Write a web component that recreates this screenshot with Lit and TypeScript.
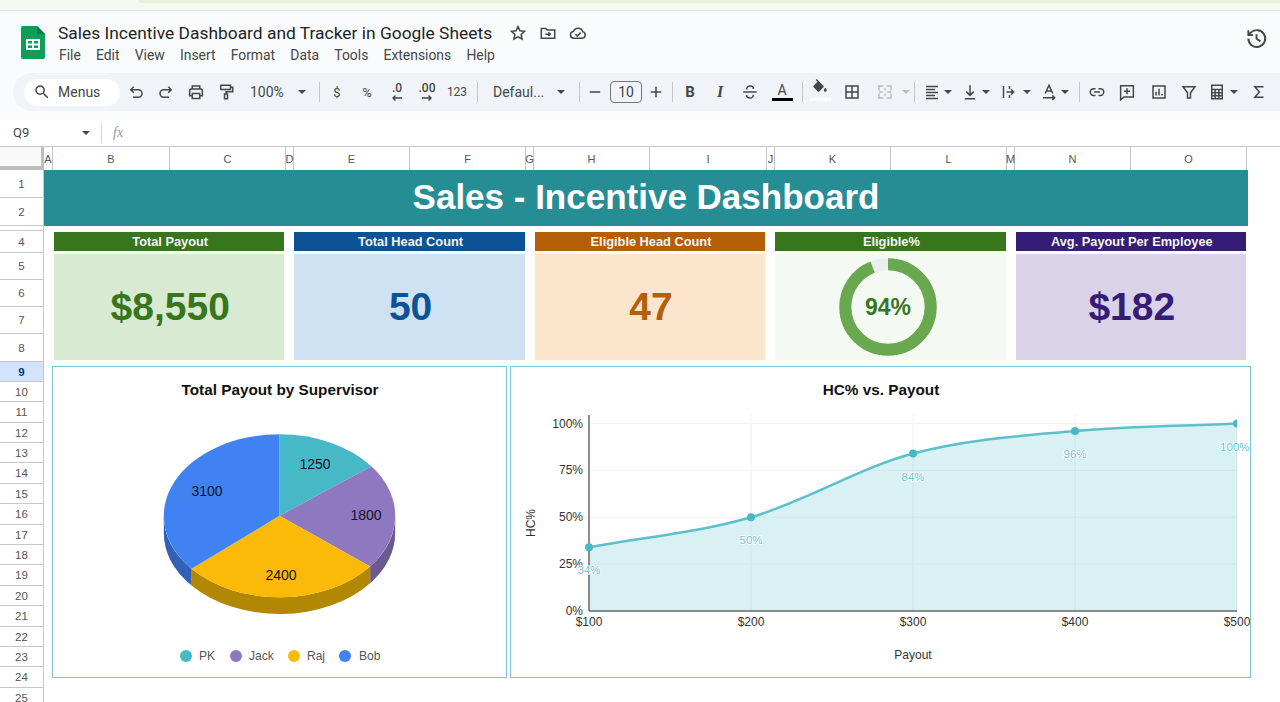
import { LitElement, css, html, svg } from "lit";
import { customElement } from "lit/decorators.js";

const ROWS: [string, number][] = [
  ["1", 28], ["2", 28], ["", 5], ["4", 22], ["5", 27], ["6", 27], ["7", 27], ["8", 28],
  ["9", 20], ["10", 20], ["11", 21], ["12", 20], ["13", 20], ["14", 21], ["15", 20],
  ["16", 21], ["17", 20], ["18", 20], ["19", 21], ["20", 20], ["21", 21], ["22", 20],
  ["23", 20], ["24", 21], ["25", 20],
];
const COLS = "ABCDEFGHIJKLMNO".split("");
const MENUS = ["File", "Edit", "View", "Insert", "Format", "Data", "Tools", "Extensions", "Help"];

const KPIS = [
  { title: "Total Payout", value: "$8,550", kind: "green" },
  { title: "Total Head Count", value: "50", kind: "blue" },
  { title: "Eligible Head Count", value: "47", kind: "orange" },
  { title: "Eligible%", value: "", kind: "pale" },
  { title: "Avg. Payout Per Employee", value: "$182", kind: "purple" },
];

const SLICES = [
  { name: "PK", value: 1250, color: "#47b9c6", side: "#358a94", lx: 315, ly: 464, dot: 186, tx: 199 },
  { name: "Jack", value: 1800, color: "#8e78c0", side: "#6a5a90", lx: 366, ly: 515, dot: 236, tx: 249 },
  { name: "Raj", value: 2400, color: "#fbb908", side: "#b18703", lx: 281, ly: 575, dot: 294, tx: 307 },
  { name: "Bob", value: 3100, color: "#4082f1", side: "#3260b5", lx: 207, ly: 491, dot: 345, tx: 359 },
];

const HC = [34, 50, 84, 96, 100];
const X0 = 589;
const STEP = 162;
const Y0 = 611;
const YH = 187.5;

const ICONS: Record<string, string> = {
  star: "M12 3.500l2.600 5.600 6.100.700-4.500 4.200 1.200 6L12 17l-5.400 3 1.200-6-4.500-4.200 6.100-.700z",
  folder: "M3 6h6l2 2h10v11H3z M8.500 13.500h6 M12.500 11l2.500 2.500-2.500 2.500",
  cloud: "M6.500 19a4.500 4.500 0 0 1-.600-8.960A6.500 6.500 0 0 1 18.300 10.200 4.500 4.500 0 0 1 17.500 19z M8.500 13.500l2.500 2.500 4.500-4.500",
  history: "M3.500 12a8.800 8.800 0 1 0 2.800-6.400L3.500 8.300 M3.500 3.500v5h5 M12 7.500V12l4 3",
  undo: "M9 5L5 9l4 4 M5 9h10a4.500 4.500 0 0 1 0 10H8",
  redo: "M15 5l4 4-4 4 M19 9H9a4.500 4.500 0 0 0 0 10h7",
  print: "M7 8V4h10v4 M7 17H3.500v-7A2 2 0 0 1 5.500 8h13a2 2 0 0 1 2 2v7H17 M7 14h10v6.500H7z",
  paint: "M5 3h13v5.500H5z M18 5.500h3v6H12v3 M10 14.500h4v6.500h-4z",
  strike: "M3 12h18 M7.500 8.500C7.500 5.500 10 4 12 4s4.500 1.200 4.500 4 M16.500 15.500c0 3-2.500 4.500-4.500 4.500s-4.500-1.200-4.500-4",
  borders: "M4 4h16v16H4z M12 4v16 M4 12h16",
  merge: "M10 4H4v6 M14 4h6v6 M10 20H4v-6 M14 20h6v-6 M4 12h5 M20 12h-5 M12 7v3 M12 14v3",
  align: "M4 4.500h16 M4 8.500h12 M4 12.500h16 M4 16.500h12 M4 20.500h16",
  valign: "M12 3v13 M7 11.500l5 5 5-5 M5 21h14",
  wrap: "M6 4v16 M14 4v4 M14 16v4 M10 12h9 M16 8.500l3.500 3.500-3.500 3.500",
  rotate: "M7 14l5-11 5 11 M8.500 10.500h7 M4 19.500h15 M16.500 16.500l3 3-3 3",
  link: "M10 16.500H7.500a4.500 4.500 0 0 1 0-9H10 M14 7.500h2.500a4.500 4.500 0 0 1 0 9H14 M8 12h8",
  comment: "M3.500 3.500h17v15H8l-4.500 4z M12 7v8 M8 11h8",
  chart: "M4 4h16v16H4z M8 16.500v-5 M12 16.500v-9 M16 16.500v-2",
  filter: "M4 5h16l-6 8v7h-4v-7z",
  calc: "M5 3h14v18H5z M5 8.500h14 M5 13h14 M5 17h14 M9.500 8.500V21 M14.500 8.500V21",
  sigma: "M18 5H6.500l6 7-6 7H18",
  minus: "M5 12h14",
  plus: "M12 5v14 M5 12h14",
};

const FILL_D =
  "M16.560 8.940L7.620 0 6.210 1.410l2.380 2.380-5.150 5.150c-.590.590-.590 1.540 0 2.120l5.500 5.500c.290.290.680.440 1.060.440s.770-.150 1.060-.440l5.500-5.500c.590-.580.590-1.530 0-2.120zM19 11.500s-2 2.170-2 3.500c0 1.100.900 2 2 2s2-.900 2-2c0-1.330-2-3.500-2-3.500z";
const SEARCH_D =
  "M15.500 14h-.790l-.280-.270A6.471 6.471 0 0 0 16 9.500 6.500 6.500 0 1 0 9.500 16c1.610 0 3.090-.590 4.230-1.570l.270.280v.790l5 4.990L20.490 19l-4.990-5zm-6 0C7.010 14 5 11.990 5 9.500S7.010 5 9.500 5 14 7.010 14 9.500 11.990 14 9.500 14z";

function ico(name: string) {
  return html`<svg class="ico" viewBox="0 0 24 24"><path d=${ICONS[name]}></path></svg>`;
}
function btn(name: string, cls = "") {
  return html`<span class="btn ${cls}">${ico(name)}</span>`;
}
const caret = (cls = "") => html`<span class="caret ${cls}"></span>`;

@customElement("app-root")
export class AppRoot extends LitElement {
  static styles = css`
    :host {
      display: block;
      width: 1280px;
      height: 702px;
      overflow: hidden;
      background: #fff;
      font-family: "Liberation Sans", Arial, sans-serif;
    }
    .strip {
      height: 10px;
      background: #f6f9f1;
      padding-left: 139px;
      border-bottom: 1px solid #e3e7e3;
    }
    .strip div {
      height: 3px;
      background: #e6f1da;
      border-bottom-left-radius: 6px;
    }
    .chrome {
      background: #f9fbfd;
      height: 108px;
      font-family: Roboto, sans-serif;
      color: #444746;
    }
    .head {
      height: 62px;
      display: flex;
      padding: 10px 12px 0 21px;
      box-sizing: border-box;
    }
    .logo {
      width: 24px;
      height: 33px;
      margin-top: 5px;
    }
    .names {
      margin-left: 13px;
      flex: 1;
    }
    .title-row {
      display: flex;
      align-items: center;
      height: 24px;
      color: #1f1f1f;
      font-size: 17.400px;
    }
    .title-row .ico {
      margin-left: 12px;
    }
    .title-row .ico.first {
      margin-left: 17px;
    }
    .menu {
      display: flex;
      gap: 15.200px;
      margin: 1px 0 0 1px;
      font-size: 13.900px;
      line-height: 19px;
    }
    .ico {
      width: 18px;
      height: 18px;
      fill: none;
      stroke: #444746;
      stroke-width: 2;
    }
    .head .history {
      width: 23px;
      height: 23px;
      margin-top: 6px;
    }
    .toolbar {
      margin-left: 13px;
      height: 38px;
      background: #f0f4f9;
      border-radius: 19px 0 0 19px;
      display: flex;
      align-items: center;
      padding-left: 11px;
      font-size: 13px;
    }
    .search {
      width: 96px;
      height: 27px;
      background: #fff;
      border-radius: 14px;
      display: flex;
      align-items: center;
      padding-left: 9px;
      box-sizing: border-box;
      margin-right: 1px;
      font-size: 14px;
      gap: 7px;
    }
    .search svg {
      width: 18px;
      height: 18px;
      fill: #444746;
    }
    .btn {
      width: 30px;
      height: 28px;
      display: flex;
      align-items: center;
      justify-content: center;
      flex: none;
      position: relative;
    }
    .caret {
      width: 12px;
      flex: none;
      display: flex;
      justify-content: center;
    }
    .caret::after {
      content: "";
      border: 4px solid transparent;
      border-top: 4px solid #444746;
      border-bottom: 0;
    }
    .caret.off::after {
      border-top-color: #bbb;
    }
    .tuck {
      margin: 0 1px 0 -5px;
    }
    .tuck-s {
      margin: 0 1px 0 -2px;
    }
    .tuck-e {
      margin-left: -4px;
    }
    .sep {
      width: 1px;
      height: 20px;
      background: #c7c7c7;
      margin: 0 2px;
      flex: none;
    }
    .sep.l11 { margin-left: 11px; }
    .sep.l5 { margin-left: 5px; }
    .sep.l12 { margin: 0 0 0 12px; }
    .sep.l7 { margin-left: 7px; }
    .sep.l5b { margin-left: 5px; }
    .ml2 { margin-left: 2px; }
    .ml3 { margin-left: 3px; }
    .ml4 { margin-left: 4px; }
    .mln2 { margin-left: -2px; }
    .zoom {
      width: 46px;
      padding-left: 9px;
      font-size: 14px;
      flex: none;
    }
    .sm {
      font-size: 12px;
    }
    .dec {
      flex-direction: column;
      font-size: 12px;
      font-weight: 500;
      line-height: 11px;
    }
    .dec svg {
      width: 12px;
      height: 6px;
      fill: none;
      stroke: #444746;
      stroke-width: 1.400;
      margin-top: 1px;
    }
    .font {
      width: 62px;
      padding-left: 13px;
      font-size: 14px;
      flex: none;
    }
    .size {
      width: 32px;
      height: 22px;
      border: 1px solid #747775;
      border-radius: 4px;
      box-sizing: border-box;
      display: flex;
      align-items: center;
      justify-content: center;
      font-size: 14px;
      flex: none;
    }
    .narrow {
      width: 28px;
    }
    .b {
      font: 700 15px Roboto, sans-serif;
    }
    .i {
      font: italic 700 16px "Liberation Serif", serif;
    }
    .a {
      font-size: 14px;
      padding-bottom: 5px;
      box-sizing: border-box;
      margin-left: 2px;
    }
    .bar {
      position: absolute;
      left: 5px;
      right: 4px;
      bottom: 5px;
      height: 3px;
      background: #000;
    }
    .bar.white {
      background: #fff;
    }
    .fill {
      fill: #444746;
      stroke: none;
      margin-bottom: 9px;
    }
    .off .ico {
      stroke: #bbb;
    }
    .namebox {
      height: 28px;
      box-sizing: border-box;
      border-bottom: 1px solid #c7c7c7;
      display: flex;
      align-items: center;
      font-family: Roboto, sans-serif;
      font-size: 13px;
      color: #444746;
      padding-left: 13px;
    }
    .cell-name {
      width: 67px;
    }
    .namebox .line {
      width: 1px;
      height: 20px;
      background: #d5d5d5;
      margin: 0 11px 0 9px;
    }
    .fx {
      font: italic 14px "Liberation Serif", serif;
      color: #999;
    }
    .cols {
      display: grid;
      grid-template-columns: 44px 9px 117px 116px 8px 116px 116px 8px 116px 117px 8px 116px 116px 8px 116px 116px 1fr;
      height: 23px;
      font-size: 11px;
      color: #555;
    }
    .cols div {
      display: flex;
      align-items: center;
      justify-content: center;
      border-right: 1px solid #c7c7c7;
      box-sizing: border-box;
    }
    .cols .corner {
      background: #f8f9fa;
      border-right: 3px solid #bdbdbd;
      border-bottom: 4px solid #bdbdbd;
    }
    .cols .rest {
      border-right: 0;
    }
    .sheet {
      display: flex;
    }
    .rows {
      width: 44px;
      flex: none;
      border-right: 1px solid #c7c7c7;
      box-sizing: border-box;
      font-size: 11.500px;
      color: #555;
    }
    .rows div {
      display: flex;
      align-items: center;
      justify-content: center;
      box-sizing: border-box;
      border-bottom: 1px solid #c7c7c7;
    }
    .rows .on {
      background: #d3e3fd;
      color: #0b3a75;
      font-weight: 700;
    }
    .canvas {
      flex: 1;
      min-width: 0;
    }
    .banner {
      width: 1204px;
      height: 56px;
      box-sizing: border-box;
      padding-bottom: 2px;
      background: #278d95;
      color: #fff;
      display: flex;
      align-items: center;
      justify-content: center;
      font-size: 35px;
      font-weight: 700;
    }
    .kpis {
      display: grid;
      grid-template-columns: repeat(5, 1fr);
      gap: 10px;
      width: 1192px;
      margin: 6px 0 0 10px;
    }
    .kpi-head {
      height: 19px;
      padding-left: 2px;
      display: flex;
      align-items: center;
      justify-content: center;
      color: #f4f4f4;
      font-size: 12.800px;
      font-weight: 700;
    }
    .kpi-body {
      height: 106px;
      margin-top: 3px;
      padding-left: 2px;
      display: flex;
      align-items: center;
      justify-content: center;
      font-size: 39px;
      font-weight: 700;
    }
    .green .kpi-head, .pale .kpi-head { background: #38761d; }
    .green .kpi-body { background: #d9ead3; color: #38761d; }
    .blue .kpi-head { background: #0b5394; }
    .blue .kpi-body { background: #cfe2f3; color: #0b5394; }
    .orange .kpi-head { background: #b45f06; }
    .orange .kpi-body { background: #fce5cd; color: #b45f06; }
    .pale .kpi-body { background: #f4f9f4; }
    .purple .kpi-head { background: #351c75; }
    .purple .kpi-body { background: #d9d2e9; color: #351c75; }
    .donut {
      width: 100px;
      height: 100px;
      margin: 0 6px 1px 0;
    }
    .donut text {
      font-size: 23px;
      font-weight: 700;
      fill: #38761d;
      text-anchor: middle;
    }
    .charts {
      display: flex;
      gap: 3px;
      margin: 6px 0 0 8px;
    }
    .panel {
      height: 312px;
      border: 1px solid #7cc6d4;
      box-sizing: border-box;
      background: #fff;
    }
    .panel svg {
      display: block;
    }
    .p1 { width: 455px; }
    .p2 { width: 741px; }
    .ct {
      font-size: 15.300px;
      font-weight: 700;
      text-anchor: middle;
      fill: #111;
    }
    .num {
      font-size: 14px;
      text-anchor: middle;
      fill: #10141f;
    }
    .leg {
      font-size: 12px;
      fill: #555;
    }
    .tick {
      font-size: 12px;
      fill: #333;
    }
    .end { text-anchor: end; }
    .mid { text-anchor: middle; }
    .pt {
      font-size: 11.500px;
      text-anchor: middle;
      fill: #6cc8d2;
      stroke: #fff;
      stroke-width: 1.500px;
      paint-order: stroke;
    }
    .pt.last {
      text-anchor: end;
    }
  `;

  private pie() {
    const cx = 279.5, cy = 515.8, rx = 115.7, ry = 81.5, depth = 16.7;
    const total = SLICES.reduce((s, d) => s + d.value, 0);
    const p = (a: number) => [cx + rx * Math.sin(a), cy - ry * Math.cos(a)];
    let acc = 0;
    const arcs = SLICES.map((d) => {
      const a0 = (acc / total) * Math.PI * 2;
      acc += d.value;
      return { ...d, a0, a1: (acc / total) * Math.PI * 2 };
    });
    const lo = Math.PI / 2, hi = Math.PI * 1.5;
    return svg`
      ${arcs.map((d) => {
        const s = Math.max(d.a0, lo), e = Math.min(d.a1, hi);
        if (e <= s) return null;
        const [x0, y0] = p(s), [x1, y1] = p(e);
        return svg`<path fill=${d.side} d="M${x0} ${y0}A${rx} ${ry} 0 0 1 ${x1} ${y1}V${y1 + depth}A${rx} ${ry} 0 0 0 ${x0} ${y0 + depth}Z"></path>`;
      })}
      ${arcs.map((d) => {
        const [x0, y0] = p(d.a0), [x1, y1] = p(d.a1);
        const large = d.a1 - d.a0 > Math.PI ? 1 : 0;
        return svg`<path fill=${d.color} d="M${cx} ${cy}L${x0} ${y0}A${rx} ${ry} 0 ${large} 1 ${x1} ${y1}Z"></path>`;
      })}
      ${arcs.map((d) => svg`<text class="num" x=${d.lx} y=${d.ly + 5}>${d.value}</text>`)}
      ${arcs.map(
        (d) => svg`<circle cx=${d.dot} cy="656" r="6" fill=${d.color}></circle>
          <text class="leg" x=${d.tx} y="660">${d.name}</text>`
      )}
    `;
  }

  private line() {
    const pts = HC.map((v, i) => [X0 + i * STEP, Y0 - (v / 100) * YH]);
    const slope = pts.map((_, i) => {
      const a = pts[Math.max(i - 1, 0)], b = pts[Math.min(i + 1, pts.length - 1)];
      return (b[1] - a[1]) / (b[0] - a[0]);
    });
    let d = `M${pts[0][0]} ${pts[0][1]}`;
    for (let i = 1; i < pts.length; i++) {
      const dx = STEP / 3;
      d += `C${pts[i - 1][0] + dx} ${pts[i - 1][1] + slope[i - 1] * dx} ${pts[i][0] - dx} ${pts[i][1] - slope[i] * dx} ${pts[i][0]} ${pts[i][1]}`;
    }
    const area = `${d}V${Y0}H${X0}Z`;
    return svg`
      <defs><clipPath id="plot"><rect x="570" y="410" width="667" height="210"></rect></clipPath></defs>
      ${[100, 75, 50, 25].map((v) => {
        const y = Y0 - (v / 100) * YH;
        return svg`<line x1=${X0} x2="1237" y1=${y} y2=${y} stroke="#f2f2f2"></line>`;
      })}
      ${[1, 2, 3, 4].map((i) => svg`<line x1=${X0 + i * STEP} x2=${X0 + i * STEP} y1="415" y2=${Y0} stroke="#f0f0f0"></line>`)}
      <path d=${area} fill="#47b9c6" fill-opacity="0.2"></path>
      <line x1=${X0} x2=${X0} y1="415" y2=${Y0} stroke="#444" stroke-width="1.200"></line>
      <line x1=${X0} x2="1237" y1=${Y0} y2=${Y0} stroke="#666" stroke-width="1.500"></line>
      <path d=${d} fill="none" stroke="#5bc0ca" stroke-width="2.500" clip-path="url(#plot)"></path>
      ${pts.map(([x, y]) => svg`<circle cx=${x} cy=${y} r="4" fill="#47b9c6" clip-path="url(#plot)"></circle>`)}
      ${[0, 25, 50, 75, 100].map(
        (v) => svg`<text class="tick end" x="583" y=${Y0 - (v / 100) * YH + 4}>${v}%</text>`
      )}
      ${HC.map((_, i) => svg`<text class="tick mid" x=${X0 + i * STEP} y="626">$${(i + 1) * 100}</text>`)}
      ${pts.map(([x, y], i) =>
        i === HC.length - 1
          ? svg`<text class="pt last" x="1249.500" y=${y + 27}>${HC[i]}%</text>`
          : svg`<text class="pt" x=${x} y=${y + 27}>${HC[i]}%</text>`
      )}
      <text class="tick mid" x="913" y="659">Payout</text>
      <text class="tick mid" transform="translate(535 523) rotate(-90)">HC%</text>
    `;
  }

  private donut() {
    const r = 42.7;
    const c = 2 * Math.PI * r;
    return html`<svg class="donut" viewBox="0 0 100 100">
      <circle cx="50" cy="50" r=${r} fill="none" stroke="#eeeeee" stroke-width="12"></circle>
      <circle cx="50" cy="50" r=${r} fill="none" stroke="#6aa84f" stroke-width="12"
        stroke-dasharray="${c * 0.94} ${c}" transform="rotate(-90 50 50)"></circle>
      <text x="50" y="58">94%</text>
    </svg>`;
  }

  private toolbar() {
    const arrowL = html`<svg viewBox="0 0 12 6"><path d="M11 3H2 M4.500 .500L2 3l2.500 2.500"></path></svg>`;
    const arrowR = html`<svg viewBox="0 0 12 6"><path d="M1 3h9 M7.500 .500L10 3 7.500 5.500"></path></svg>`;
    return html`<div class="toolbar">
      <div class="search"><svg viewBox="0 0 24 24"><path d=${SEARCH_D}></path></svg>Menus</div>
      ${btn("undo")}${btn("redo")}${btn("print")}${btn("paint")}
      <span class="zoom">100%</span>${caret()}
      <span class="sep l11"></span>
      <span class="btn">$</span><span class="btn">%</span>
      <span class="btn dec">.0${arrowL}</span><span class="btn dec">.00${arrowR}</span>
      <span class="btn sm">123</span>
      <span class="sep l5"></span>
      <span class="font">Defaul...</span>${caret()}
      <span class="sep l12"></span>
      <span class="btn">${ico("minus")}</span>
      <span class="size">10</span>
      <span class="btn narrow">${ico("plus")}</span>
      <span class="sep"></span>
      <span class="btn b">B</span><span class="btn i">I</span>
      ${btn("strike")}
      <span class="btn a">A<i class="bar"></i></span>
      <span class="sep l5b"></span>
      <span class="btn"><svg class="ico fill" viewBox="0 0 24 24"><path d=${FILL_D}></path></svg><i class="bar white"></i></span>
      ${btn("borders", "ml2")}
      <span class="btn off ml3">${ico("merge")}</span>${caret("off")}
      <span class="sep"></span>
      ${btn("align")}${caret("tuck")}${btn("valign")}${caret("tuck")}${btn("wrap")}${caret("tuck-s")}${btn("rotate")}${caret("tuck")}
      <span class="sep l7"></span>
      ${btn("link")}${btn("comment")}${btn("chart", "ml2")}${btn("filter")}${btn("calc", "mln2")}${caret("tuck-e")}${btn("sigma", "ml4")}
    </div>`;
  }

  render() {
    return html`
      <div class="strip"><div></div></div>
      <div class="chrome">
        <div class="head">
          <svg class="logo" viewBox="0 0 24 33">
            <path fill="#0f9d58" d="M2 0h14l8 8v23a2 2 0 0 1-2 2H2a2 2 0 0 1-2-2V2a2 2 0 0 1 2-2z"></path>
            <path fill="#0a7f45" d="M16 0l8 8h-8z"></path>
            <path fill="none" stroke="#fff" stroke-width="2" d="M6 14h12v9H6z M6 18.500h12 M12 14v9"></path>
          </svg>
          <div class="names">
            <div class="title-row">
              Sales Incentive Dashboard and Tracker in Google Sheets
              <svg class="ico first" viewBox="0 0 24 24"><path d=${ICONS.star}></path></svg>
              ${ico("folder")}${ico("cloud")}
            </div>
            <div class="menu">${MENUS.map((m) => html`<span>${m}</span>`)}</div>
          </div>
          <svg class="ico history" viewBox="0 0 24 24"><path d=${ICONS.history}></path></svg>
        </div>
        ${this.toolbar()}
      </div>
      <div class="namebox">
        <span class="cell-name">Q9</span><span class="caret"></span><span class="line"></span>
        <span class="fx">fx</span>
      </div>
      <div class="cols">
        <div class="corner"></div>
        ${COLS.map((c) => html`<div>${c}</div>`)}
        <div class="rest"></div>
      </div>
      <div class="sheet">
        <div class="rows">
          ${ROWS.map(
            ([n, h]) => html`<div class=${n === "9" ? "on" : ""} style="height:${h}px">${n}</div>`
          )}
        </div>
        <div class="canvas">
          <div class="banner">Sales - Incentive Dashboard</div>
          <div class="kpis">
            ${KPIS.map(
              (k) => html`<div class=${k.kind}>
                <div class="kpi-head">${k.title}</div>
                <div class="kpi-body">${k.value || this.donut()}</div>
              </div>`
            )}
          </div>
          <div class="charts">
            <div class="panel p1">
              <svg width="453" height="310" viewBox="53 367 453 310">
                <text class="ct" x="280" y="395">Total Payout by Supervisor</text>
                ${this.pie()}
              </svg>
            </div>
            <div class="panel p2">
              <svg width="739" height="310" viewBox="511 367 739 310">
                <text class="ct" x="881" y="395">HC% vs. Payout</text>
                ${this.line()}
              </svg>
            </div>
          </div>
        </div>
      </div>
    `;
  }
}
